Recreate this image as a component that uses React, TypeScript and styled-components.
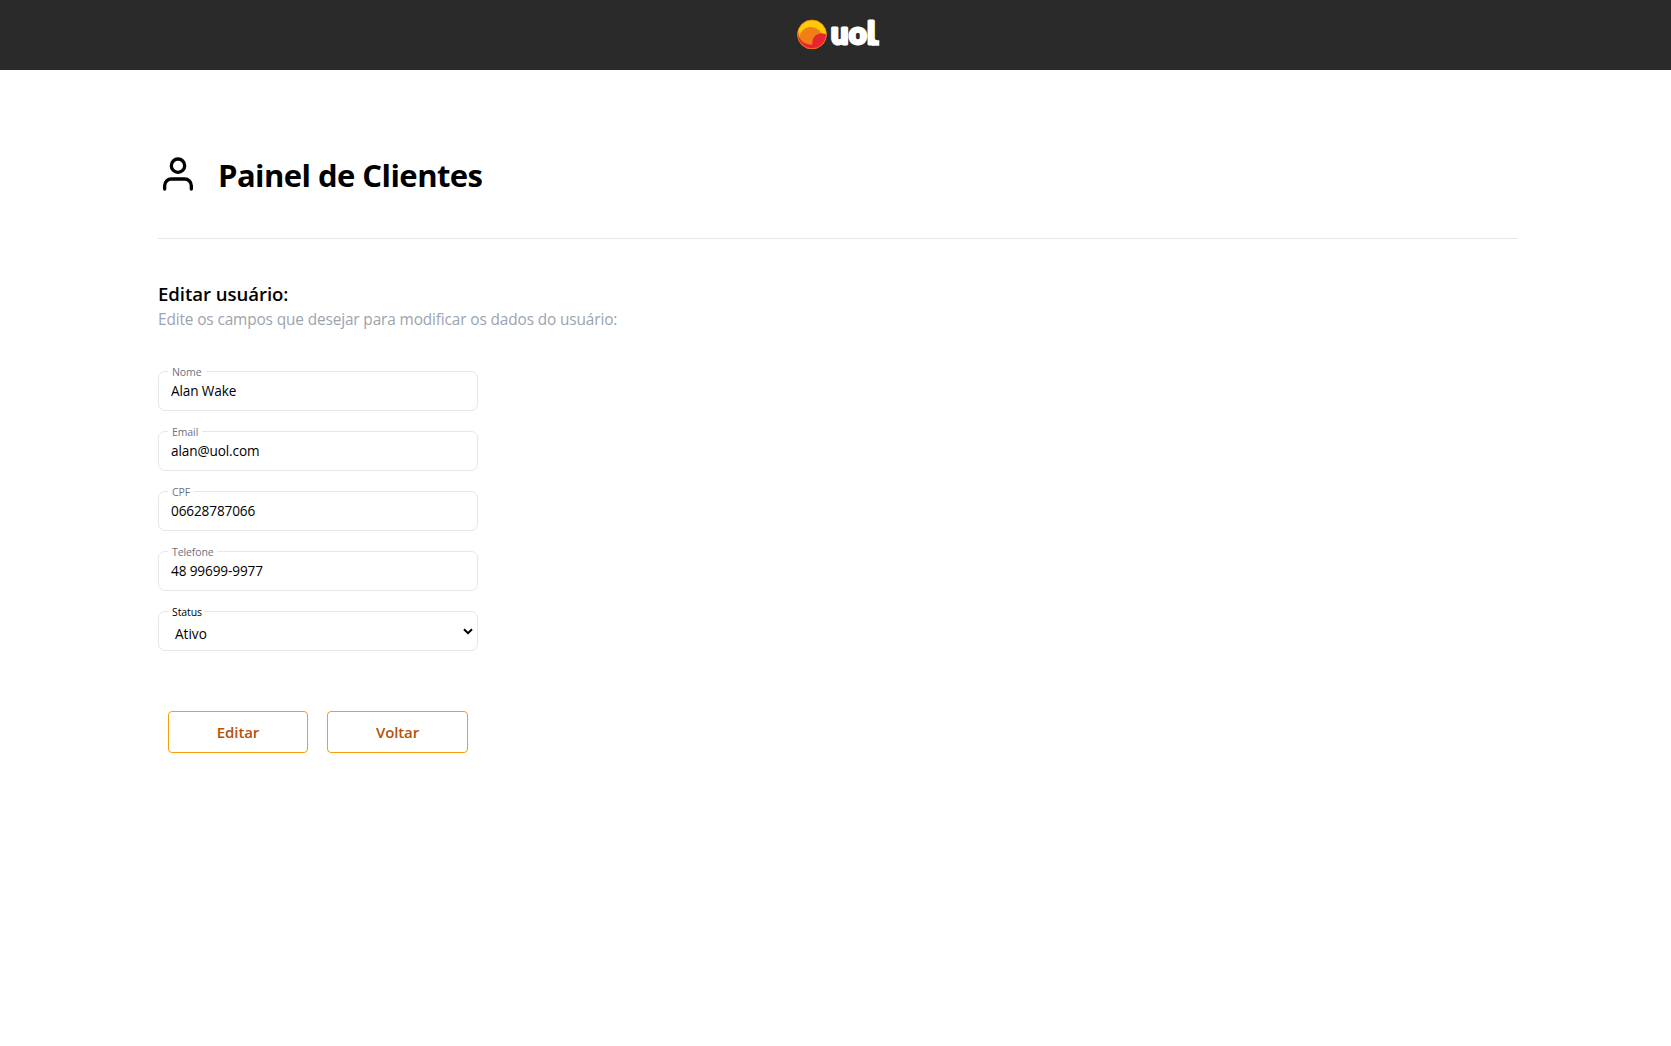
import React from 'react';
import styled, { createGlobalStyle } from 'styled-components';

const GlobalStyle = createGlobalStyle`
  *, *::before, *::after { box-sizing: border-box; }
  body { margin: 0; background: #fff; color: #000; font-family: "Open Sans", "Noto Sans", sans-serif; }
  h1, h2, p { margin: 0; }
`;

const Header = styled.header`
  height: 70px;
  background: #2a2a2a;
  display: flex;
  justify-content: center;
  padding-top: 16px;
`;
const LogoSvg = styled.svg`
  display: block;
  width: 90px;
  height: 36px;
  margin-left: 11px;
  overflow: visible;
`;
const Container = styled.main`
  width: 1360px;
  margin-left: 158px;
`;
const TitleBar = styled.div`
  display: flex;
  align-items: center;
  gap: 20px;
  height: 169px;
  padding-top: 42px;
  padding-bottom: 1px;
  border-bottom: 1px solid #e5e7eb;
`;
const UserIcon = styled.svg`
  width: 40px;
  height: 40px;
  flex: none;
  margin-bottom: 2px;
`;
const Title = styled.h1`
  font-size: 31px;
  line-height: 40px;
  font-weight: 700;
  letter-spacing: -0.55px;
  white-space: nowrap;
  padding-top: 1px;
`;
const Intro = styled.section`
  padding-top: 41px;
`;
const Subtitle = styled.h2`
  font-size: 18.6px;
  line-height: 28px;
  font-weight: 600;
  letter-spacing: -0.06px;
`;
const Hint = styled.p`
  font-size: 15.4px;
  line-height: 24px;
  letter-spacing: -0.13px;
  color: #9ca3af;
`;
const Form = styled.form`
  width: 320px;
  padding-top: 39px;
`;
const Fields = styled.div`
  display: flex;
  flex-direction: column;
  gap: 20px;
`;
const Field = styled.div`
  position: relative;
  height: 40px;
  display: flex;
  border: 1px solid #e5e7eb;
  border-radius: 7px;
`;
const Label = styled.label<{ $dark?: boolean; $width: number }>`
  position: absolute;
  left: 9px;
  top: -7px;
  width: ${(p) => p.$width}px;
  padding-left: 4px;
  background: #fff;
  font-size: 10.5px;
  line-height: 14px;
  letter-spacing: -0.1px;
  white-space: nowrap;
  color: ${(p) => (p.$dark ? '#000' : '#6b7280')};
`;
const Input = styled.input`
  width: 100%;
  border: 0;
  outline: 0;
  padding: 0 12px 1px;
  background: transparent;
  font: 400 13.6px "Open Sans", "Noto Sans", sans-serif;
  letter-spacing: -0.12px;
  color: #000;
`;
const SelectButton = styled.button`
  width: 100%;
  display: flex;
  align-items: center;
  justify-content: space-between;
  border: 0;
  background: transparent;
  padding: 4px 4px 0 16px;
  font: 400 13.6px "Open Sans", "Noto Sans", sans-serif;
  letter-spacing: 0;
  color: #000;
`;
const Chevron = styled.svg`
  width: 10px;
  height: 7px;
  margin-bottom: 4px;
`;
const Actions = styled.div`
  display: grid;
  grid-template-columns: 140px 141px;
  gap: 19px;
  padding: 60px 10px 0;
`;
const Button = styled.button`
  height: 42px;
  border: 1px solid #f59e0b;
  border-radius: 4px;
  background: #fff;
  color: #b45309;
  padding: 0;
  font: 600 15px "Open Sans", "Noto Sans", sans-serif;
  letter-spacing: -0.1px;
`;

const Wordmark = styled.text`
  font: 900 30.5px Lato, sans-serif;
  fill: #fff;
  stroke: #fff;
  stroke-width: 3px;
  stroke-linejoin: round;
`;

const Logo = () => (
  <LogoSvg viewBox="0 0 90 36" role="img" aria-label="UOL">
    <defs>
      <clipPath id="ball"><circle cx="16" cy="18.4" r="14.5" /></clipPath>
    </defs>
    <g clipPath="url(#ball)">
      <rect width="32" height="36" fill="#ffcb05" />
      <path d="M0 13C3 25 8 32 18 34H0Z" fill="#e8242e" />
      <circle cx="14.9" cy="22.5" r="11.5" fill="#f07f1a" />
      <path d="M2 15C3 26 9 29 18 28.5L18 34H1Z" fill="#e8242e" />
      <circle cx="25.5" cy="26.5" r="9.3" fill="#e8242e" />
    </g>
    <circle cx="16" cy="18.4" r="14.4" fill="none" stroke="#f07f1a" strokeWidth="0.8" />
    <Wordmark x="35 53 71.2" y="28.3">uol</Wordmark>
    <path d="M77 19C77 22.5 79 24.3 83.3 24.3V29.8H76Z" fill="#fff" />
  </LogoSvg>
);

const fields = [
  { id: 'nome', label: 'Nome', value: 'Alan Wake', notch: 38 },
  { id: 'email', label: 'Email', value: 'alan@uol.com', notch: 34 },
  { id: 'cpf', label: 'CPF', value: '06628787066', notch: 26 },
  { id: 'telefone', label: 'Telefone', value: '48 99699-9977', notch: 49 },
];

export default function App() {
  return (
    <>
      <GlobalStyle />
      <Header><Logo /></Header>
      <Container>
        <TitleBar>
          <UserIcon viewBox="0 0 24 24" fill="none" stroke="#000" strokeWidth="2" strokeLinecap="round" strokeLinejoin="round">
            <path d="M20 21v-2a4 4 0 0 0-4-4H8a4 4 0 0 0-4 4v2" />
            <circle cx="12" cy="7" r="4" />
          </UserIcon>
          <Title>Painel de Clientes</Title>
        </TitleBar>
        <Intro>
          <Subtitle>Editar usuário:</Subtitle>
          <Hint>Edite os campos que desejar para modificar os dados do usuário:</Hint>
        </Intro>
        <Form onSubmit={(e) => e.preventDefault()}>
          <Fields>
            {fields.map((f) => (
              <Field key={f.id}>
                <Input id={f.id} defaultValue={f.value} />
                <Label htmlFor={f.id} $width={f.notch}>{f.label}</Label>
              </Field>
            ))}
            <Field>
              <SelectButton id="status" type="button">
                Ativo
                <Chevron viewBox="0 0 10 7" fill="none" stroke="#000" strokeWidth="2">
                  <path d="M1 1.2 5 5.2 9 1.2" />
                </Chevron>
              </SelectButton>
              <Label htmlFor="status" $dark $width={37}>Status</Label>
            </Field>
          </Fields>
          <Actions>
            <Button type="submit">Editar</Button>
            <Button type="button">Voltar</Button>
          </Actions>
        </Form>
      </Container>
    </>
  );
}
